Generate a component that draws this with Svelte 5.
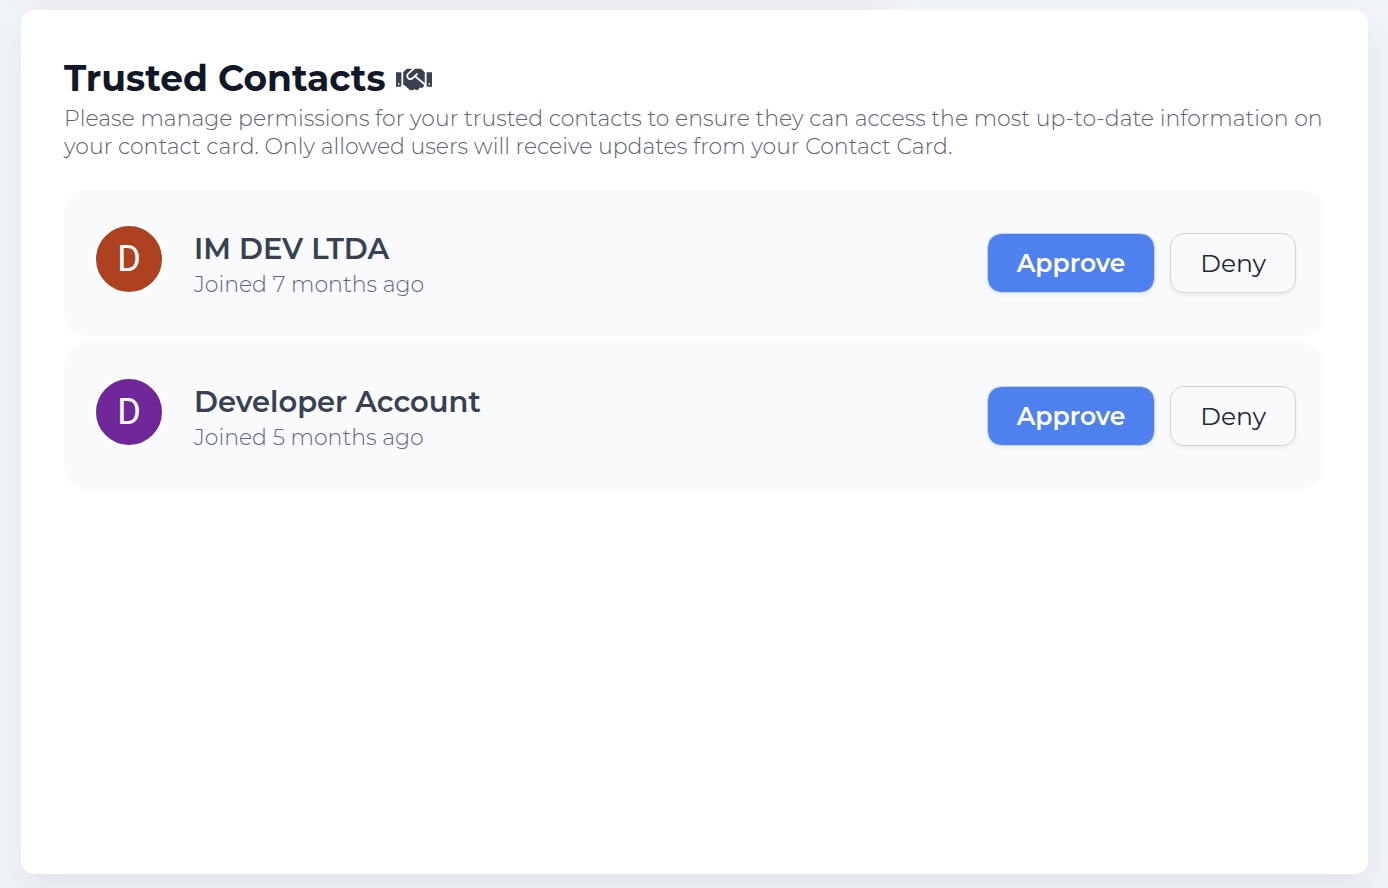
<script>
  const contacts = [
    { name: 'IM DEV LTDA', joined: 'Joined 7 months ago', initial: 'D', tone: 'rust' },
    { name: 'Developer Account', joined: 'Joined 5 months ago', initial: 'D', tone: 'violet' }
  ];
</script>

<main>
  <section class="card" aria-labelledby="title">
    <header>
      <div class="heading">
        <h1 id="title">Trusted Contacts</h1>
        <svg viewBox="0 0 640 512" width="36" height="29" aria-hidden="true">
          <path fill="currentColor" d="M434.7 64h-85.9c-8 0-15.7 3-21.6 8.4l-98.3 90c-.1.1-.2.3-.3.4-16.6 15.6-16.3 40.5-2.1 56 12.7 13.9 39.4 17.6 56.1 2.7.1-.1.3-.1.4-.2l79.9-73.2c6.5-5.9 16.7-5.5 22.6 1 6 6.5 5.5 16.6-1 22.6l-26.1 23.9L504 313.8c2.9 2.4 5.5 5 7.9 7.7V128l-54.6-54.6c-5.9-6-14.1-9.4-22.6-9.4zM544 128.2v223.9c0 17.7 14.3 32 32 32h64V128.2h-96zm48 223.9c-8.8 0-16-7.2-16-16s7.2-16 16-16 16 7.2 16 16-7.2 16-16 16zM0 384h64c17.7 0 32-14.3 32-32V128.2H0V384zm48-63.9c8.8 0 16 7.2 16 16s-7.2 16-16 16-16-7.2-16-16c0-8.9 7.2-16 16-16zm435.9 18.6L334.6 217.5l-30 27.5c-29.7 27.1-75.2 24.5-101.7-4.4-26.9-29.4-24.8-74.9 4.4-101.7L289.1 64h-83.8c-8.5 0-16.6 3.4-22.6 9.4L128 128v223.9h18.3l90.5 81.9c27.4 22.3 67.7 18.1 90-9.3l.2-.2 17.9 15.5c15.9 13 39.4 10.5 52.3-5.4l31.4-38.6 5.4 4.4c13.7 11.1 33.9 9.1 45-4.7l9.5-11.7c11.2-13.8 9.1-33.9-4.6-45.1z" />
        </svg>
      </div>
      <p class="intro">Please manage permissions for your trusted contacts to ensure they can access the most up-to-date information on your contact card. Only allowed users will receive updates from your Contact Card.</p>
    </header>

    <ul>
      {#each contacts as contact}
        <li>
          <span class="avatar {contact.tone}" aria-hidden="true">{contact.initial}</span>
          <div class="who">
            <h2>{contact.name}</h2>
            <p>{contact.joined}</p>
          </div>
          <div class="actions">
            <button type="button" class="approve">Approve</button>
            <button type="button" class="deny">Deny</button>
          </div>
        </li>
      {/each}
    </ul>
  </section>
</main>

<style>
  :global(body) {
    margin: 0;
    background: #f0f4f9;
  }

  main {
    box-sizing: border-box;
    display: flex;
    min-height: 100vh;
    padding: 10px 20px 14px 21px;
    overflow: hidden;
    background: linear-gradient(90deg, #f0f4f9 0, #edeef3 50px, #edeef3 860px, #f0f4f9 920px) top / 100% 10px no-repeat;
    font-family: Montserrat, Inter, sans-serif;
  }

  .card {
    box-sizing: border-box;
    flex: 1;
    padding: 44px 44px 44px 43px;
    border-radius: 14px;
    background: #fff;
    box-shadow: 0 18px 36px 0 rgb(40 10 20 / 5%), 0 14px 18px -10px rgb(0 0 0 / 3%);
  }

  h1, h2, p, ul {
    margin: 0;
    padding: 0;
  }

  .heading {
    display: flex;
    align-items: flex-end;
    gap: 10px;
    padding-bottom: 3px;
    color: #374151;
  }

  .heading svg {
    margin-bottom: 8px;
  }

  h1 {
    color: #111827;
    font-size: 36px;
    font-weight: 700;
    line-height: 48px;
  }

  .intro {
    color: #5c6373;
    font-size: 22px;
    font-weight: 300;
    line-height: 28px;
  }

  ul {
    display: grid;
    gap: 7px;
    margin-top: 29px;
    list-style: none;
  }

  li {
    display: flex;
    align-items: flex-start;
    padding: 34px 28px 34px 30px;
    border-radius: 22px;
    background: #f9fafc;
  }

  .avatar {
    display: grid;
    flex: none;
    place-items: center;
    width: 66px;
    height: 66px;
    margin-right: 30px;
    border: 2px solid #fff;
    border-radius: 50%;
    color: #fff;
    font-family: Roboto, sans-serif;
    font-size: 36px;
    line-height: 40px;
  }

  .rust {
    background: #ae4220;
  }

  .violet {
    background: #70279a;
  }

  .who {
    flex: 1;
    min-width: 0;
    padding-top: 4px;
  }

  h2 {
    color: #374151;
    font-size: 29px;
    font-weight: 600;
    line-height: 42px;
  }

  .who p {
    color: #5d6784;
    font-size: 22px;
    font-weight: 300;
    line-height: 30px;
    padding-bottom: 2px;
  }

  .actions {
    display: flex;
    flex: none;
    gap: 15px;
    padding-top: 9px;
  }

  button {
    height: 60px;
    padding: 0 29px;
    border: 1px solid #d1d5db;
    border-radius: 14px;
    font-family: inherit;
    font-size: 25px;
    line-height: 36px;
    box-shadow: 0 2px 4px rgb(0 0 0 / 6%);
    cursor: pointer;
  }

  .approve {
    border-color: #c5d5f7;
    background: #4e80ee;
    background-clip: padding-box;
    color: #fff;
    font-weight: 600;
  }

  .deny {
    background: #f9fafc;
    color: #1f2937;
    font-weight: 400;
  }
</style>
